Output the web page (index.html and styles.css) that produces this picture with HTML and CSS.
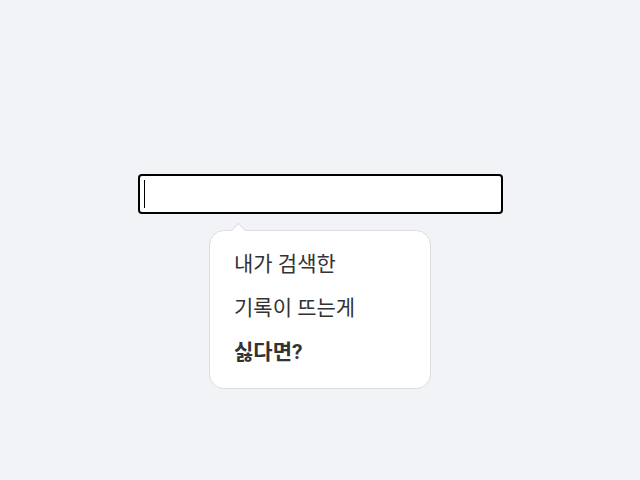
FILE: index.html
```html
<!DOCTYPE html>
<html lang="ko">
<head>
  <meta charset="UTF-8">
  <title>검색</title>
  <meta name="viewport" content="width=device-width, initial-scale=1.0">
  <link rel="stylesheet" href="styles.css">
</head>
<body>

  <div class="page">
    <div class="search-box">
      <span class="caret"></span>
    </div>

    <div class="tip">
      <p>내가 검색한</p>
      <p>기록이 뜨는게</p>
      <p class="strong">싫다면?</p>
    </div>
  </div>

</body>
</html>
```

FILE: styles.css
```css
:root {
  --bg: #f2f3f7;
  --text: #333;
  --line: #dcdde2;
}

body {
  margin: 0;
  background: var(--bg);
  font-family: Roboto, "Noto Sans CJK KR", sans-serif;
  color: var(--text);
}

.page {
  display: flex;
  flex-direction: column;
  align-items: center;
  padding-top: 174px;
}

.search-box {
  box-sizing: border-box;
  width: 365px;
  height: 40px;
  margin-left: 1px;
  background: #fff;
  border: 2px solid #000;
  border-radius: 4px;
  padding: 4px 0 0 4px;
}

.caret {
  display: block;
  width: 1px;
  height: 28px;
  background: #000;
}

/* speech bubble under the search field */
.tip {
  position: relative;
  box-sizing: border-box;
  width: 222px;
  margin-top: 16px;
  padding: 11px 24px 14px;
  background: #fff;
  border: 1px solid var(--line);
  border-radius: 15px;
}

.tip::before {
  content: "";
  position: absolute;
  top: -6px;
  left: 23px;
  width: 10px;
  height: 10px;
  background: #fff;
  border-top: 1px solid var(--line);
  border-left: 1px solid var(--line);
  transform: rotate(45deg);
}

.tip p {
  margin: 0;
  font-size: 21px;
  line-height: 44px;
}

.tip .strong {
  font-weight: bold;
}
```
